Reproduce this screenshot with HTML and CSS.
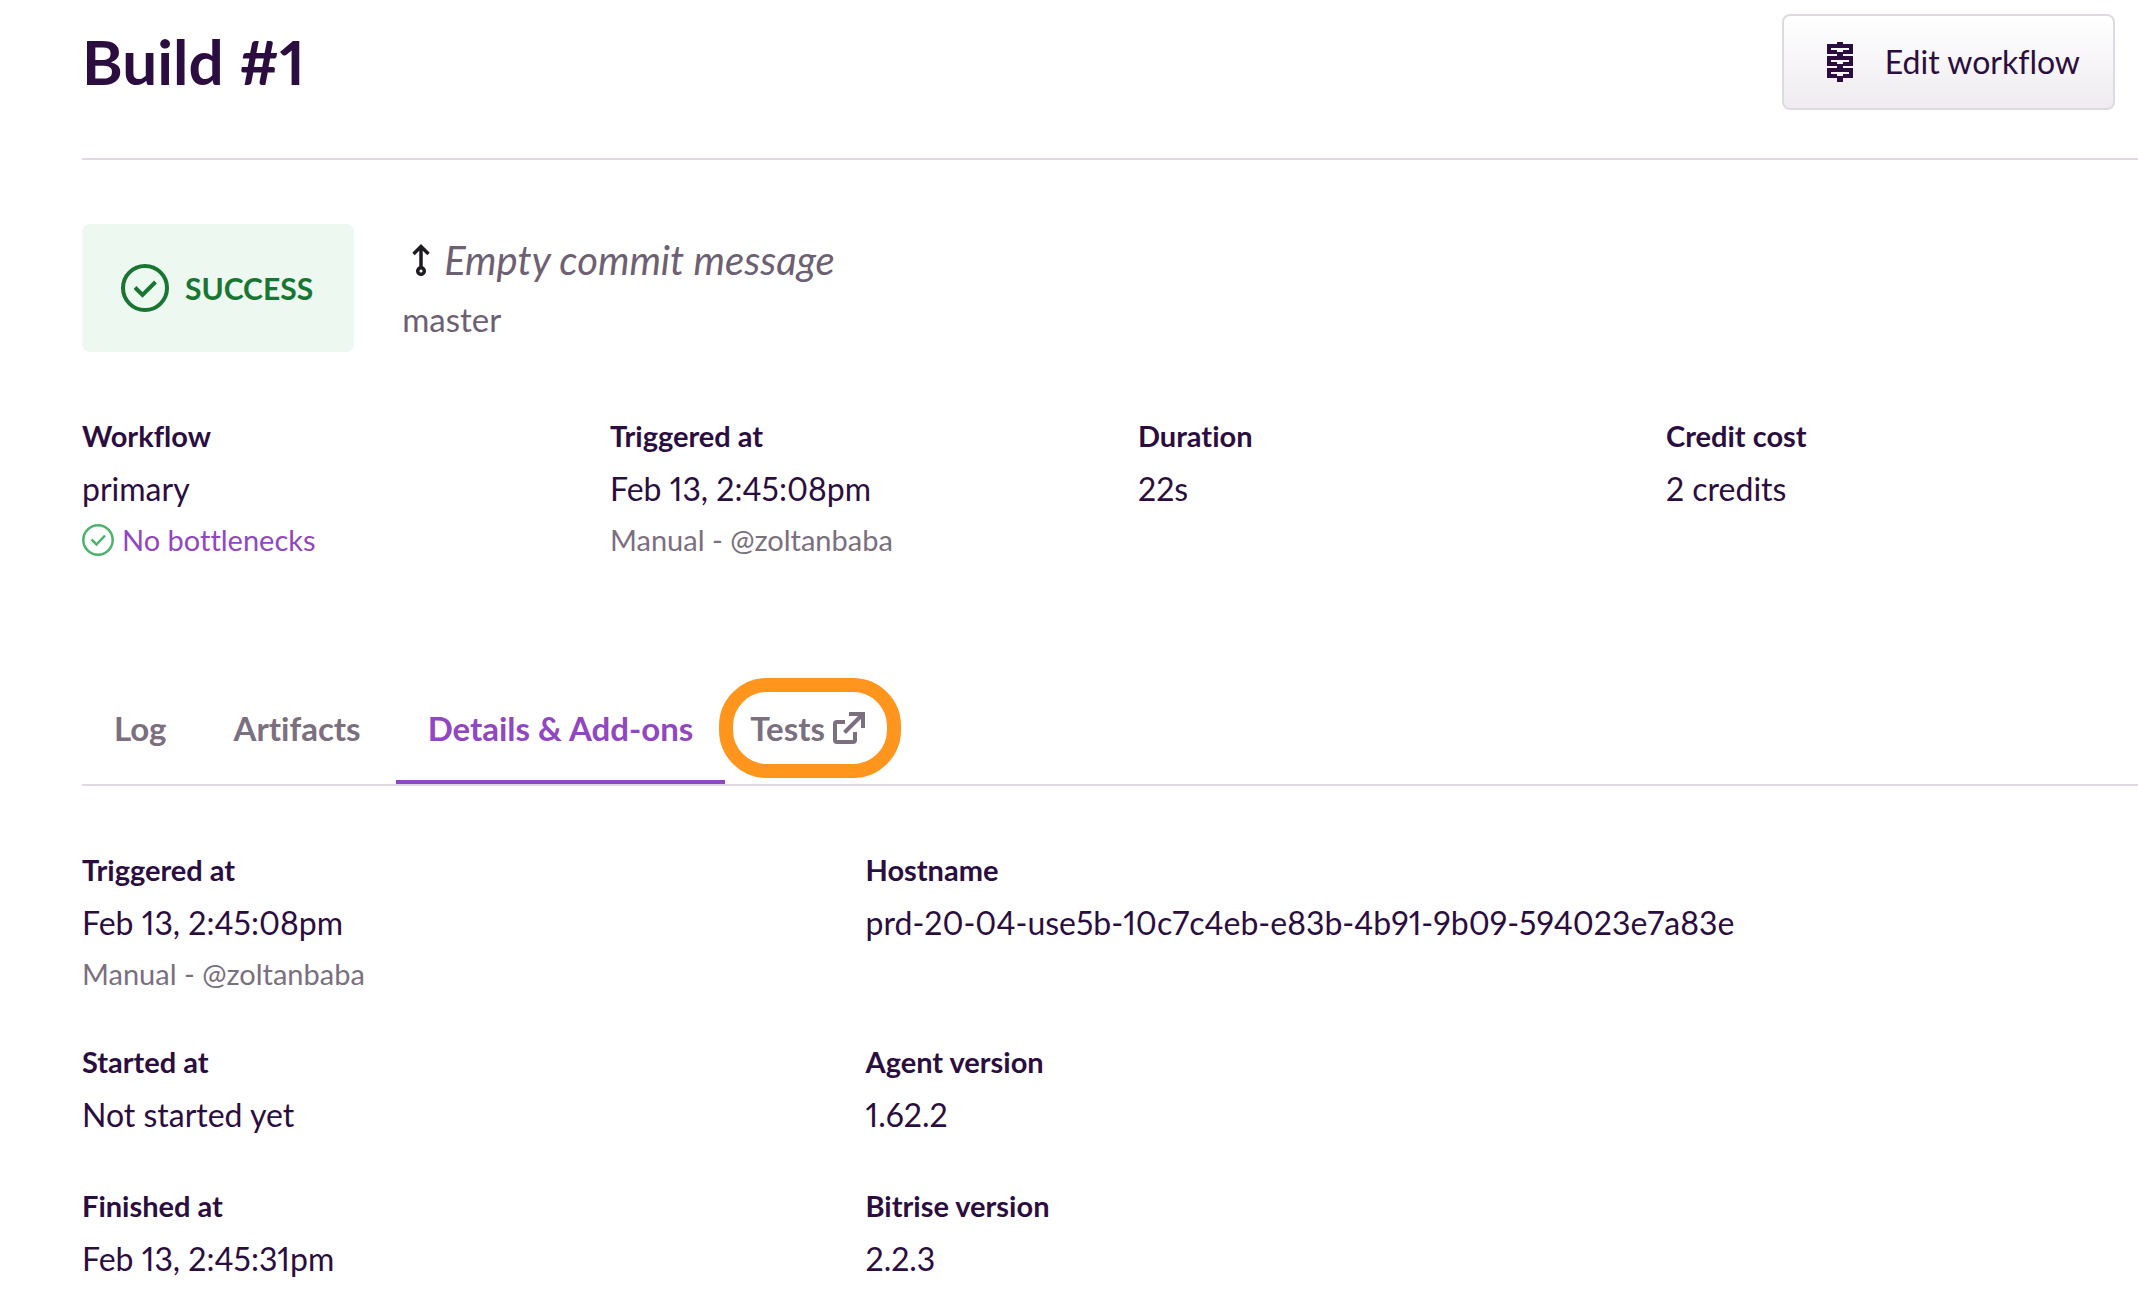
FILE: index.html
```html
<!DOCTYPE html>
<html lang="en">
<head>
<meta charset="utf-8">
<title>Build #1</title>
<link rel="stylesheet" href="styles.css">
</head>
<body>
<main class="page">
  <header class="header">
    <h1 class="title">Build #1</h1>
    <button class="edit-button" type="button">
      <svg class="edit-icon" viewBox="0 0 26 40" aria-hidden="true" fill="currentColor" fill-rule="evenodd"><path d="M10 0h6v2h10v10H16v2h10v10H16v2h10v10H16v4h-6v-4H0V26h10v-2H0V14h10v-2H0V2h10zM4 6v2h6v2h6V8h6V6zM4 18v2h6v2h6v-2h6v-2zM4 30v2h6v2h6v-2h6v-2z"/></svg>
      <span>Edit workflow</span>
    </button>
  </header>

  <section class="summary">
    <div class="status">
      <svg class="status-icon" viewBox="0 0 48 48" aria-hidden="true" fill="none" stroke="currentColor" stroke-width="4"><circle cx="24" cy="24" r="22"/><path d="M14 23.500l7.500 7.500L34.500 18"/></svg>
      <span>SUCCESS</span>
    </div>
    <div class="commit">
      <p class="commit-message">
        <svg class="commit-icon" viewBox="0 0 18 32" aria-hidden="true" fill="none" stroke="currentColor" stroke-width="3.500"><path d="M9 23V3M1.500 10L9 2.500l7.500 7.500"/><circle cx="9" cy="27" r="3.300"/></svg>
        <em>Empty commit message</em>
      </p>
      <p class="branch">master</p>
    </div>
  </section>

  <dl class="facts">
    <div class="fact">
      <dt>Workflow</dt>
      <dd>primary</dd>
      <dd class="note"><a class="bottlenecks" href="#bottlenecks"><svg class="note-icon" viewBox="0 0 32 32" aria-hidden="true" fill="none" stroke="currentColor" stroke-width="2.500"><circle cx="16" cy="16" r="14.700"/><path d="M9.500 15.500l5 5L23 11.500"/></svg>No bottlenecks</a></dd>
    </div>
    <div class="fact">
      <dt>Triggered at</dt>
      <dd>Feb 13, 2:45:08pm</dd>
      <dd class="note">Manual - @zoltanbaba</dd>
    </div>
    <div class="fact">
      <dt>Duration</dt>
      <dd>22s</dd>
    </div>
    <div class="fact">
      <dt>Credit cost</dt>
      <dd>2 credits</dd>
    </div>
  </dl>

  <nav class="tabs" aria-label="Build sections">
    <a class="tab" href="#log">Log</a>
    <a class="tab" href="#artifacts">Artifacts</a>
    <a class="tab tab-active" href="#details" aria-current="page">Details &amp; Add-ons</a>
    <a class="tab tab-external" href="#tests">Tests
      <svg class="external-icon" viewBox="0 0 32 32" aria-hidden="true" fill="none" stroke="currentColor" stroke-width="4"><path d="M12 10H4a2 2 0 0 0-2 2v16a2 2 0 0 0 2 2h16a2 2 0 0 0 2-2v-8M16 2h14v14M29 3L11.500 20.500"/></svg>
    </a>
  </nav>

  <dl class="details" id="details">
    <div class="fact">
      <dt>Triggered at</dt>
      <dd>Feb 13, 2:45:08pm</dd>
      <dd class="note">Manual - @zoltanbaba</dd>
    </div>
    <div class="fact">
      <dt>Hostname</dt>
      <dd>prd-20-04-use5b-10c7c4eb-e83b-4b91-9b09-594023e7a83e</dd>
    </div>
    <div class="fact">
      <dt>Started at</dt>
      <dd>Not started yet</dd>
    </div>
    <div class="fact">
      <dt>Agent version</dt>
      <dd>1.62.2</dd>
    </div>
    <div class="fact">
      <dt>Finished at</dt>
      <dd>Feb 13, 2:45:31pm</dd>
    </div>
    <div class="fact">
      <dt>Bitrise version</dt>
      <dd>2.2.3</dd>
    </div>
  </dl>
</main>
</body>
</html>
```
FILE: styles.css
```css
* {
  box-sizing: border-box;
}

body {
  margin: 0;
  background: #fff;
  color: #2b0e3f;
  font-family: Lato, "Liberation Sans", sans-serif;
  font-size: 32px;
  font-variant-ligatures: none;
  font-variant-numeric: proportional-nums;
  line-height: 48px;
}

h1,
p,
dl,
dd {
  margin: 0;
}

a {
  color: inherit;
  text-decoration: none;
}

svg {
  flex: none;
}

.page {
  padding-left: 82px;
}

.header {
  display: flex;
  align-items: flex-start;
  justify-content: space-between;
  padding: 14px 23px 48px 0;
  border-bottom: 2px solid #dfdae1;
}

.title {
  padding: 16px 0;
  font-size: 62px;
  font-weight: 700;
  line-height: 62px;
}

.edit-button {
  display: flex;
  align-items: center;
  gap: 32px;
  height: 96px;
  padding: 0 33px 0 43px;
  border: 2px solid #dfdae1;
  border-radius: 8px;
  background: linear-gradient(#fff, #efebf0);
  color: inherit;
  font: inherit;
  font-variant-ligatures: none;
}

.edit-icon {
  width: 26px;
  height: 40px;
}

.summary {
  display: flex;
  gap: 48px;
  margin-top: 64px;
}

.status {
  display: flex;
  align-items: center;
  gap: 16px;
  padding: 40px 41px 40px 39px;
  border-radius: 8px;
  background: #edf8f1;
  color: #187532;
  font-size: 30px;
  font-weight: 700;
}

.status-icon {
  width: 48px;
  height: 48px;
}

.commit {
  padding-top: 12px;
  color: #6d6073;
}

.commit-message {
  display: flex;
  align-items: center;
  gap: 14px;
  padding-left: 10px;
  font-size: 40px;
}

.commit-icon {
  width: 18px;
  height: 32px;
  color: #201b22;
}

.branch {
  margin-top: 11px;
  font-size: 33px;
}

.facts {
  display: grid;
  grid-template-columns: repeat(4, 1fr);
  column-gap: 56px;
  margin-top: 64px;
}

.fact {
  display: flex;
  flex-direction: column;
  gap: 8px;
}

.fact dt {
  font-size: 29px;
  font-weight: 700;
  line-height: 40px;
}

.fact dd {
  padding-top: 2px;
  line-height: 46px;
}

.fact .note {
  padding-top: 0;
  color: #7b6f80;
  font-size: 29px;
  line-height: 40px;
}

.bottlenecks {
  display: flex;
  align-items: center;
  gap: 8px;
  color: #9247c2;
}

.note-icon {
  width: 32px;
  height: 32px;
  color: #4bb36b;
}

.tabs {
  display: flex;
  gap: 3px;
  margin-top: 112px;
  border-bottom: 2px solid #dfdae1;
  color: #7b6f80;
  font-size: 33px;
  font-weight: 700;
}

.tab {
  padding: 32px 32px 28px;
  border-bottom: 4px solid transparent;
}

.tab-active {
  border-bottom-color: #9247c2;
  color: #9247c2;
}

.tab-external {
  position: relative;
  display: flex;
  align-items: center;
  gap: 8px;
  padding-left: 22px;
}

.tab-external::after {
  position: absolute;
  inset: 6px -4px 2px -9px;
  border: 14px solid #ff951c;
  border-radius: 48px;
  content: "";
}

.external-icon {
  width: 32px;
  height: 32px;
}

.details {
  display: grid;
  grid-template-columns: 3fr 5fr;
  gap: 48px 20px;
  margin-top: 64px;
}
```
